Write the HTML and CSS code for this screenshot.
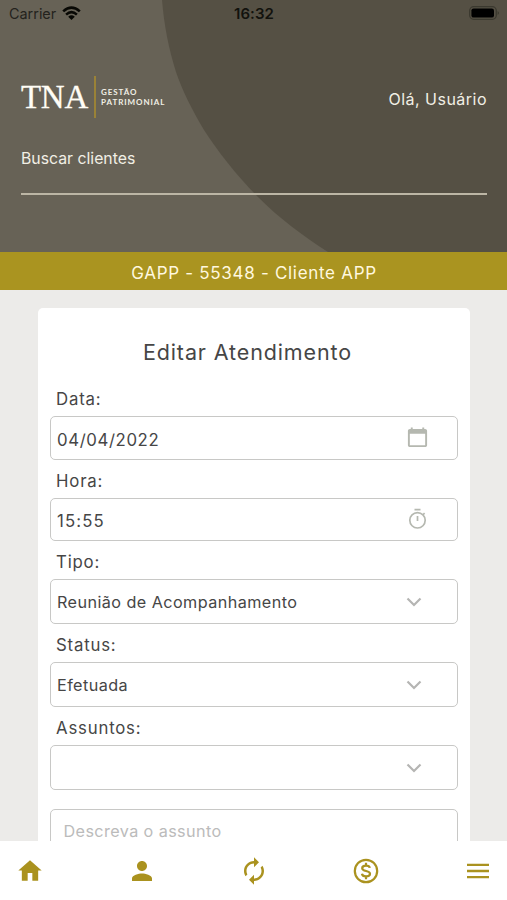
FILE: index.html
```html
<!DOCTYPE html>
<html lang="pt-BR">
<head>
<meta charset="utf-8">
<title>Editar Atendimento</title>
<link rel="stylesheet" href="styles.css">
</head>
<body>
<div class="app">
  <header class="header">
    <svg class="header-art" viewBox="0 0 507 252" aria-hidden="true"><path fill="#555044" d="M162 0C164 25 169 50 176 72C182 90 192 110 204 130C218 152 238 177 258 197C280 219 303 236 328 252H507V0Z"/></svg>
    <div class="statusbar">
      <div class="carrier"><span>Carrier</span>
        <svg width="19" height="15" viewBox="0 0 19 15" fill="none" stroke="#080804" stroke-width="2.6"><path d="M1.2 5.4Q9.5-2.2 17.8 5.4M4.1 8.6Q9.5 3.8 14.9 8.6"/><path d="M9.5 14L6.2 10.7Q9.5 8 12.8 10.7Z" fill="#080804" stroke="none"/></svg>
      </div>
      <span class="clock">16:32</span>
      <svg class="battery" width="31" height="14" viewBox="0 0 31 14"><rect x=".7" y=".7" width="26.6" height="12.6" rx="4" fill="none" stroke="#3b392f" stroke-width="1.3"/><rect x="2.4" y="2.4" width="22.6" height="9.2" rx="2.2" fill="#000"/><path d="M28.6 5Q31.4 7 28.6 9Z" fill="#3b392f"/></svg>
    </div>
    <div class="brandrow">
      <div class="brand"><span class="tna">TNA</span><span class="rule"></span><span class="tagline"><span>GESTÃO</span><span>PATRIMONIAL</span></span></div>
      <span class="hello">Olá, Usuário</span>
    </div>
    <div class="search">Buscar clientes</div>
  </header>
  <div class="client"><span>GAPP - 55348 - Cliente APP</span></div>
  <main class="content">
    <section class="card">
      <h1>Editar Atendimento</h1>
      <div class="label">Data:</div>
      <div class="field"><span class="wide">04/04/2022</span>
        <svg class="date-icon" width="23" height="23" viewBox="0 0 24 24" fill="#b5b8b0"><path d="M20 3h-1V1.500h-2V3H7V1.500H5V3H4c-1.100 0-2 .9-2 2v15c0 1.100.9 2 2 2h16c1.100 0 2-.9 2-2V5c0-1.100-.9-2-2-2zm0 17H4V8h16z"/></svg>
      </div>
      <div class="label">Hora:</div>
      <div class="field"><span class="wide time">15:55</span>
        <svg class="date-icon" width="24" height="24" viewBox="0 0 24 24" fill="none" stroke="#b5b8b0" stroke-width="1.700"><circle cx="12.500" cy="13.300" r="7.700"/><path d="M9.500 2.700h6M12.500 9v5M17.800 8l1.800-1.800"/></svg>
      </div>
      <div class="label">Tipo:</div>
      <div class="field select"><span>Reunião de Acompanhamento</span>
        <svg class="chevron" width="16" height="10" viewBox="0 0 16 10"><path d="M1.500 1.500L8 8L14.500 1.500"/></svg>
      </div>
      <div class="label">Status:</div>
      <div class="field select"><span>Efetuada</span>
        <svg class="chevron" width="16" height="10" viewBox="0 0 16 10"><path d="M1.500 1.500L8 8L14.500 1.500"/></svg>
      </div>
      <div class="label">Assuntos:</div>
      <div class="field select"><span></span>
        <svg class="chevron" width="16" height="10" viewBox="0 0 16 10"><path d="M1.500 1.500L8 8L14.500 1.500"/></svg>
      </div>
      <div class="area">Descreva o assunto</div>
    </section>
  </main>
  <nav class="nav">
    <svg width="28" height="28" viewBox="0 0 24 24" fill="#aa921f"><path d="M10 20.300v-6.500h4v6.500h5v-8.800h3L12 2.700 2 11.500h3v8.800z"/></svg>
    <svg width="30" height="30" viewBox="0 0 24 24" fill="#aa921f"><path d="M12 12c2.210 0 4-1.790 4-4s-1.790-4-4-4-4 1.790-4 4 1.790 4 4 4zm0 2c-2.670 0-8 1.340-8 4v2h16v-2c0-2.660-5.330-4-8-4z"/></svg>
    <svg width="30" height="30" viewBox="0 0 24 24" fill="#aa921f"><path d="M12 6v3l4-4-4-4v3c-4.420 0-8 3.580-8 8 0 1.570.46 3.030 1.240 4.260L6.700 14.800c-.45-.83-.7-1.790-.7-2.800 0-3.310 2.690-6 6-6zm6.760 1.740L17.300 9.200c.44.84.7 1.790.7 2.800 0 3.310-2.690 6-6 6v-3l-4 4 4 4v-3c4.420 0 8-3.580 8-8 0-1.570-.46-3.030-1.240-4.260z"/></svg>
    <svg width="28" height="28" viewBox="0 0 28 28" fill="none" stroke="#aa921f" stroke-width="2.200"><circle cx="14" cy="14" r="11.200"/><path d="M17.800 10.900C17.500 9.400 16 8.600 14 8.600c-2.200 0-3.800 1-3.800 2.600 0 3.700 7.800 1.900 7.800 5.500 0 1.700-1.700 2.700-4 2.700-2.300 0-3.800-1-4.100-2.600M14 5.800v2.800M14 19.400v2.800"/></svg>
    <svg width="24" height="28" viewBox="0 0 24 28" stroke="#aa921f" stroke-width="2.300"><path d="M1 7.900H23M1 14H23M1 20.100H23"/></svg>
  </nav>
</div>
</body>
</html>
```
FILE: styles.css
```css
* { box-sizing: border-box; }
body { margin: 0; font-family: Inter, "Liberation Sans", sans-serif; color: #464646; }
.app { height: 900px; display: flex; flex-direction: column; overflow: hidden; background: #ecebe9; }
.header { position: relative; flex: none; height: 252px; background: #676256; color: #f1efe5; }
.header-art { position: absolute; left: 0; top: 0; width: 507px; height: 252px; }
.statusbar, .brandrow, .search { position: relative; }
.statusbar { height: 28px; padding: 0 7px 0 9px; display: grid; grid-template-columns: 1fr auto 1fr; align-items: center; color: #12120d; }
.carrier { display: flex; align-items: center; gap: 6px; color: #24231d; font-size: 14.4px; }
.carrier span { margin-top: -2px; }
.carrier svg { margin-top: -2px; }
.clock { font-weight: 600; font-size: 15px; letter-spacing: .1px; margin: -2px 0 0 -1px; }
.battery { justify-self: end; margin-top: -2px; }
.brandrow { height: 44px; margin: 47px 20px 0 21px; display: flex; justify-content: space-between; align-items: center; }
.brand { display: flex; align-items: center; }
.tna { font: 33px/44px "Liberation Serif", serif; letter-spacing: -.3px; width: 73px; color: #fffdf5; -webkit-text-stroke: .3px #fffdf5; }
.rule { width: 2px; height: 42px; background: #9a8237; }
.tagline { margin-left: 5px; display: flex; flex-direction: column; font: 700 8px/10px Lato, sans-serif; letter-spacing: .93px; }
.hello { font-size: 16px; letter-spacing: .48px; margin-top: 4px; }
.search { margin: 20px 20px 0 21px; height: 56px; padding-top: 10px; border-bottom: 2px solid #bcb6a5; font-size: 15.800px; line-height: 20px; }
.client { flex: none; height: 38px; background: #aa9420; color: #fff8df; text-align: center; font-size: 17px; line-height: 42px; letter-spacing: .7px; }
.client span { margin-left: 1px; }
.content { flex: 1; min-height: 0; overflow: hidden; padding: 18px 37px 0 38px; }
.card { height: 620px; padding: 23px 12px 0; background: #fff; border-radius: 5px; }
h1 { margin: 0 0 9px; padding-right: 13px; height: 38px; text-align: center; font-size: 21.500px; line-height: 43px; font-weight: 400; letter-spacing: .88px; }
.label { height: 37.900px; padding-left: 6px; font-size: 16.800px; line-height: 43px; letter-spacing: .8px; }
.field { height: 43.800px; display: flex; align-items: center; justify-content: space-between; border: 1.500px solid #c8c8c6; border-radius: 5px; padding: 0 28px 0 6px; font-size: 16.200px; letter-spacing: .43px; }
.wide { font-size: 16.800px; letter-spacing: .6px; padding-top: 4px; }
.time { letter-spacing: 1.100px; }
.select { height: 45px; padding-right: 35px; }
.chevron { fill: none; stroke: #b5b5b3; stroke-width: 2.200; }
.area { height: 100px; margin-top: 18.500px; border: 1.500px solid #c8c8c6; border-radius: 5px; padding: 11px 12.500px; font-size: 16.200px; line-height: 20px; letter-spacing: .4px; color: #bbb; }
.nav { flex: none; height: 59px; background: #fff; display: grid; grid-template-columns: repeat(5, 111.800px); justify-content: center; justify-items: center; align-items: center; padding-left: 1px; }
```
